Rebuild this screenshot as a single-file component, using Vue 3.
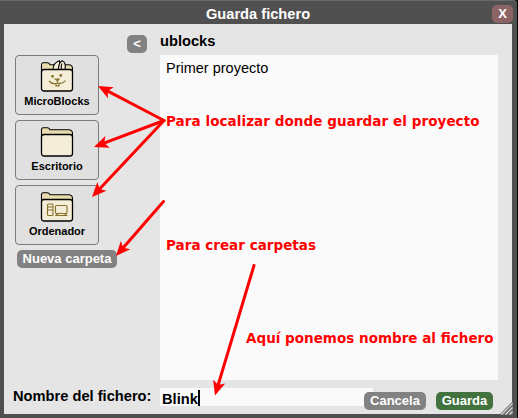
<script setup>
import { ref } from 'vue'

const places = [
  { name: 'MicroBlocks', icon: 'rabbit' },
  { name: 'Escritorio', icon: 'folder' },
  { name: 'Ordenador', icon: 'computer' },
]
const files = ['Primer proyecto']
const fileName = ref('Blink')

const arrows = [
  { from: [164, 120.5], to: [98, 86] },
  { from: [164, 120.5], to: [94, 147] },
  { from: [164, 120.5], to: [92, 197] },
  { from: [163.5, 201.5], to: [116, 256] },
  { from: [254, 265.5], to: [215, 395.5] },
]

function shape(a) {
  const dx = a.to[0] - a.from[0]
  const dy = a.to[1] - a.from[1]
  const len = Math.hypot(dx, dy)
  return {
    x2: a.to[0] - (dx / len) * 10,
    y2: a.to[1] - (dy / len) * 10,
    head: `translate(${a.to[0]} ${a.to[1]}) rotate(${(Math.atan2(dy, dx) * 180) / Math.PI})`,
  }
}
</script>

<template>
  <div class="dialog">
    <header class="titlebar">
      <span class="title">Guarda fichero</span>
      <button class="btn close">X</button>
    </header>
    <main class="body">
      <aside class="side">
        <button class="btn back">&lt;</button>
        <div class="places">
          <div v-for="p in places" :key="p.name" class="place">
            <svg class="icon" width="34" height="34" viewBox="0 0 34 34">
              <path d="M1.500 12V4.500Q1.500 3 3 2.800H7.500Q9.500 3 10 4.800H28.500Q32.500 5 32.500 8.500V12Z" fill="#e8dcae" stroke="#000" stroke-width="1.100" />
              <g v-if="p.icon === 'rabbit'" fill="#f6efd8" stroke="#000" stroke-width="1.100">
                <path d="M13 9.500Q13 3 19.500 0.800Q20.500 4 18 9.500Z" />
                <path d="M18.500 9.500Q18.500 3 22 0.800Q26.500 2.500 25 9.500Z" />
                <path d="M21.500 9.500Q20.500 6 22 3.500" fill="none" />
              </g>
              <rect x="1.500" y="9.500" width="31" height="21.500" rx="2.500" fill="#f4edd8" stroke="#000" stroke-width="1.300" />
              <g v-if="p.icon === 'rabbit'" fill="none" stroke="#87732d" stroke-width="1.200">
                <circle cx="12.500" cy="16.300" r="1.400" fill="#87732d" stroke="none" />
                <circle cx="20.800" cy="15.500" r="1.400" fill="#87732d" stroke="none" />
                <path d="M15.500 19H19L17.500 20.800Z" fill="#87732d" />
                <path d="M9 21Q12.500 25 17.500 23Q22.500 24.500 25.500 20.500M17.500 20V23M16 23.800V25.800H19V23.800" />
              </g>
              <g v-if="p.icon === 'computer'" fill="none" stroke="#87732d" stroke-width="1.100">
                <rect x="7.500" y="14" width="5.500" height="11.500" rx="1" />
                <path d="M7.500 17H13M7.500 20H13" />
                <rect x="15.500" y="15.500" width="11.500" height="8" rx="1" />
                <path d="M18 23.500L16 25.500H26.500L24.500 23.500" />
              </g>
            </svg>
            <span>{{ p.name }}</span>
          </div>
        </div>
        <button class="btn new-folder">Nueva carpeta</button>
        <label class="name-label">Nombre del fichero:</label>
      </aside>
      <section class="content">
        <h1 class="folder">ublocks</h1>
        <div class="list">
          <div v-for="f in files" :key="f">{{ f }}</div>
        </div>
        <div class="bottom">
          <div class="name-field"><span>{{ fileName }}</span><i class="caret"></i></div>
          <button class="btn cancel">Cancela</button>
          <button class="btn save">Guarda</button>
        </div>
      </section>
    </main>
    <svg class="grip" width="14" height="14" viewBox="0 0 14 14">
      <path d="M14 0V14H0Z" fill="#6c6c6c" />
      <path d="M2.500 13.500L13.500 2.500M6.500 13.500L13.500 6.500M10.500 13.500L13.500 10.500" stroke="#dcdcdc" stroke-width="1.200" />
    </svg>
    <svg class="notes" width="518" height="418" viewBox="0 0 518 418">
      <g v-for="(a, i) in arrows" :key="i">
        <line :x1="a.from[0]" :y1="a.from[1]" :x2="shape(a).x2" :y2="shape(a).y2" />
        <path :transform="shape(a).head" d="M0 0L-14.500 -6.300L-11 0L-14.500 6.300Z" />
      </g>
      <text x="166" y="126" textLength="313.500">Para localizar donde guardar el proyecto</text>
      <text x="166" y="250" textLength="150">Para crear carpetas</text>
      <text x="246" y="343" textLength="247.500">Aquí ponemos nombre al fichero</text>
    </svg>
  </div>
</template>

<style>
body {
  margin: 0;
  background: #000;
}
</style>

<style scoped>
.dialog {
  position: relative;
  box-sizing: border-box;
  width: 517px;
  height: 418px;
  padding: 0 5px 4px 4px;
  overflow: hidden;
  background: #505050;
  border-radius: 0 4px 0 0;
  box-shadow: inset 0 1px #686b69;
  font-family: "Liberation Sans", Arial, sans-serif;
  font-weight: bold;
  font-size: 14.670px;
  color: #000;
}
.titlebar {
  display: flex;
  height: 24px;
  justify-content: flex-end;
}
.title {
  flex: 1;
  padding: 5px 0 0 20px;
  line-height: 18px;
  text-align: center;
  color: #fff;
}
.btn {
  box-sizing: border-box;
  display: block;
  height: 18px;
  padding: 0 0 1px;
  border: 0;
  border-radius: 5px;
  background: #828282;
  color: #fff;
  font: bold 13px/17px "Liberation Sans", Arial, sans-serif;
  text-align: center;
  white-space: nowrap;
}
.close {
  width: 21px;
  margin: 5px -1px 0 0;
  background: #8c6464;
}
.body {
  display: flex;
  height: 390px;
  background: #e5e5e5;
}
.side {
  box-sizing: border-box;
  display: flex;
  flex-direction: column;
  width: 156px;
  padding-top: 11px;
}
.back {
  width: 20px;
  margin-left: 123px;
}
.places {
  display: flex;
  flex-direction: column;
  gap: 5px;
  margin: 2px 0 0 11px;
}
.place {
  box-sizing: border-box;
  display: flex;
  flex-direction: column;
  align-items: center;
  width: 84px;
  height: 60px;
  padding-top: 4px;
  border: 1px solid #7c7c7c;
  border-radius: 4px;
  background: #e0e0e0;
  font-size: 11px;
  line-height: 13px;
}
.icon {
  flex: none;
  margin-bottom: 1px;
}
.new-folder {
  width: 100px;
  margin: 5px 0 0 13px;
}
.name-label {
  margin: 119px 0 0 9px;
  font-size: 14.670px;
  line-height: 18px;
  white-space: nowrap;
}
.content {
  width: 338px;
}
.folder {
  height: 31px;
  margin: 0;
  padding-top: 8px;
  box-sizing: border-box;
  font-size: 14.670px;
  line-height: 18px;
}
.list {
  box-sizing: border-box;
  height: 325px;
  padding: 4px 6px;
  background: #fafafa;
  font-size: 14.500px;
  font-weight: normal;
  line-height: 18px;
}
.bottom {
  display: flex;
  padding-top: 8px;
}
.name-field {
  box-sizing: border-box;
  display: flex;
  width: 213px;
  height: 18px;
  padding: 2px 0 0 2px;
  background: #fafafa;
  line-height: 18px;
}
.caret {
  width: 2px;
  height: 16px;
  background: #000;
}
.cancel {
  width: 62px;
  margin: 4px 10px 0 -9px;
}
.save {
  width: 57px;
  margin-top: 4px;
  background: #42733f;
}
.grip {
  position: absolute;
  left: 499px;
  top: 401px;
}
.notes {
  position: absolute;
  left: 0;
  top: 0;
  pointer-events: none;
  fill: #f00;
  font: bold 13.500px "DejaVu Sans", sans-serif;
}
.notes line {
  stroke: #f00;
  stroke-width: 3;
  stroke-linecap: round;
}
</style>
